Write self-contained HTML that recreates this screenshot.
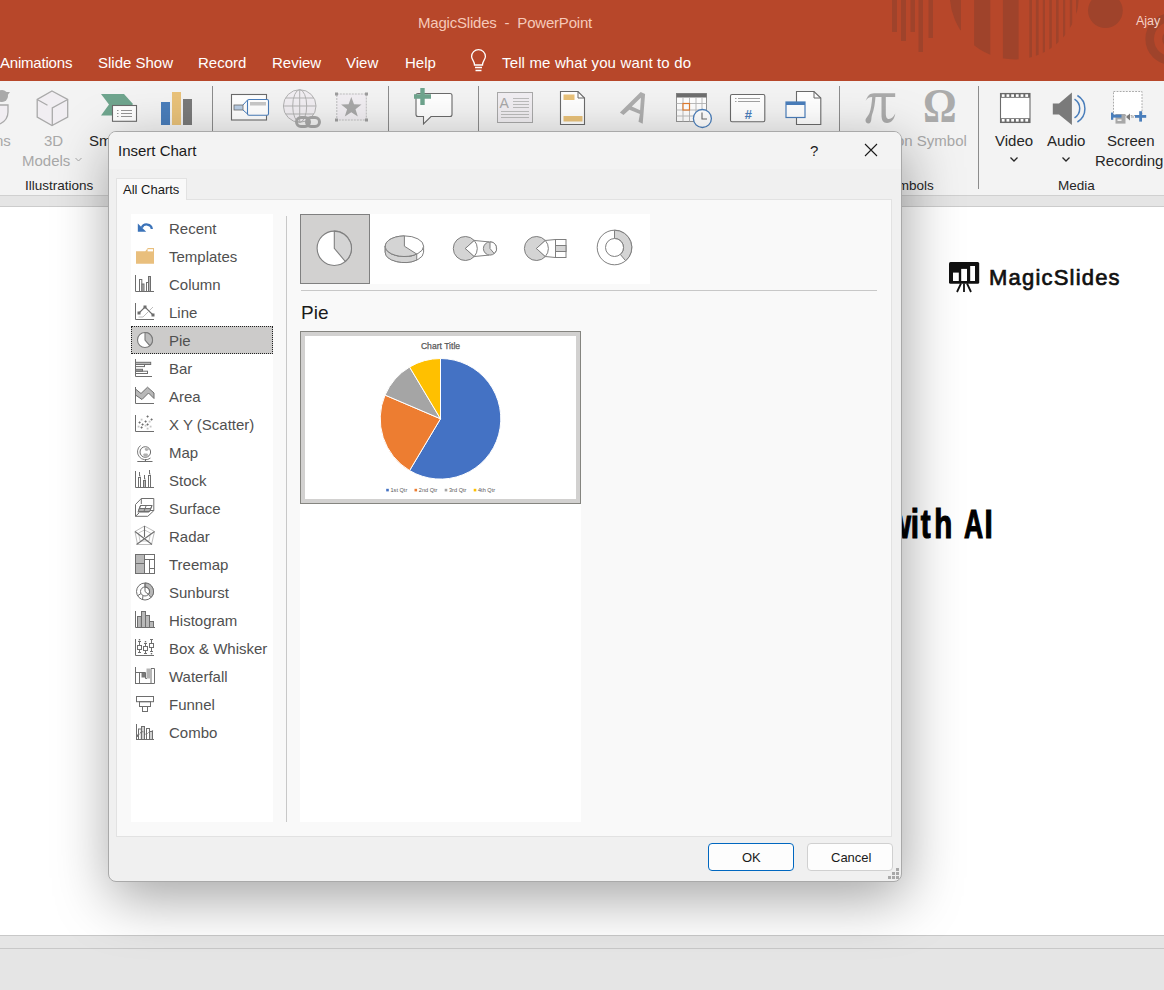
<!DOCTYPE html>
<html><head><meta charset="utf-8">
<style>
*{box-sizing:border-box}
html,body{margin:0;padding:0}
body{width:1164px;height:990px;overflow:hidden;position:relative;background:#fff;font-family:"Liberation Sans",sans-serif;color:#262626}
.a{position:absolute}
.t{position:absolute;white-space:nowrap;line-height:1}
#title{left:0;top:0;width:1164px;height:81px;background:#B7472A}
#ribbon{left:0;top:81px;width:1164px;height:114px;background:#F3F3F3}
.menu{color:#fff;font-size:15px;top:55px}
.rl{font-size:15px;color:#262626}
.rg{font-size:15px;color:#A8A8A8}
.sep{position:absolute;width:1px;background:#C8C8C8}
#dlg{left:108px;top:131px;width:794px;height:751px;background:#F0F0F0;border:1px solid #A9A9A9;border-radius:8px;box-shadow:3px 16px 56px rgba(0,0,0,0.36)}
.li{font-size:15px;color:#505050;left:169px}
</style></head><body>
<!-- title bar -->
<div id="title" class="a"></div>
<div class="t" style="left:418px;top:15px;font-size:15px;color:#F6C9B9;letter-spacing:-0.2px">MagicSlides&nbsp; -&nbsp; PowerPoint</div>
<div class="t" style="left:1136px;top:15px;font-size:12.5px;color:#F5D3C8;z-index:3">Ajay</div>
<div class="t menu" style="left:0px;letter-spacing:-0.2px">Animations</div>
<div class="t menu" style="left:98px">Slide Show</div>
<div class="t menu" style="left:198px">Record</div>
<div class="t menu" style="left:272px">Review</div>
<div class="t menu" style="left:346px">View</div>
<div class="t menu" style="left:405px">Help</div>
<div class="t menu" style="left:502px;letter-spacing:0.15px">Tell me what you want to do</div>

<!-- ribbon -->
<div id="ribbon" class="a"></div>
<div class="a" style="left:0;top:195px;width:1164px;height:1px;background:#D0D0D0"></div>
<div class="a" style="left:0;top:196px;width:1164px;height:10px;background:#E5E5E5"></div>
<div class="a" style="left:0;top:206px;width:1164px;height:1px;background:#CCCCCC"></div>
<div class="t rl" style="left:25px;top:179px;font-size:13.5px">Illustrations</div>
<div class="t rl" style="left:1058px;top:179px;font-size:13.5px">Media</div>


<!-- ribbon icons -->
<svg class="a" style="left:0;top:0" width="1164" height="200">
<!-- title decoration -->
<g fill="#9F432B">
<rect x="892" y="0" width="5" height="32"/>
<rect x="901" y="0" width="5" height="41"/>
<rect x="910.5" y="0" width="4.5" height="32"/>
<rect x="918.5" y="0" width="4.5" height="52"/>
<rect x="928.5" y="0" width="4.5" height="38"/>
<clipPath id="bigc"><circle cx="1014.5" cy="-5.2" r="64.7"/></clipPath>
<g clip-path="url(#bigc)">
<rect x="950" y="0" width="11" height="30.3"/>
<rect x="974.1" y="0" width="16.2" height="70"/>
<rect x="1002.9" y="0" width="15.7" height="70"/>
<rect x="1029.3" y="0" width="2.7" height="70"/>
<rect x="1035.9" y="0" width="2.7" height="70"/>
<rect x="1042.8" y="0" width="2.2" height="70"/>
<rect x="1049.3" y="0" width="2.5" height="70"/>
<rect x="1056" y="0" width="2.6" height="70"/>
<rect x="1063" y="0" width="2.2" height="70"/>
<rect x="1069.8" y="0" width="2.4" height="70"/>
<rect x="1076" y="0" width="2.6" height="70"/>
</g>
<circle cx="1105.4" cy="10.6" r="17.4"/>
</g>
<circle cx="1171.2" cy="39" r="21.5" fill="none" stroke="#9F432B" stroke-width="8.6"/><circle cx="1171.2" cy="39" r="9" fill="#9F432B"/>
<!-- lightbulb -->
<path d="M474.5 65 C474.5 61 471.6 59.5 471.6 56.5 A6.9 6.9 0 0 1 485.4 56.5 C485.4 59.5 482.5 61 482.5 65 Z" fill="none" stroke="#fff" stroke-width="1.3"/>
<path d="M475 67.5 H482 M475.5 70.5 H481.5" stroke="#fff" stroke-width="1.3"/>
<!-- icons person (partial) -->
<circle cx="2" cy="96" r="6" fill="#A9A9A9"/>
<path d="M-2 92 H10 L7 96 H-2 Z" fill="#A9A9A9"/>
<path d="M-2 105 H8 V112 C8 118 4 122 0 124" fill="#F1EEF2" stroke="#A9A9A9" stroke-width="1.3"/>
<!-- 3D cube -->
<path d="M52 91 L67.7 99.5 V117 L52 125.5 L37.2 117 V99.5 Z" fill="#F1EEF2" stroke="#A9A9A9" stroke-width="1.3"/>
<path d="M67.7 99.5 L52.3 108 V125.5 M37.2 99.5 L47.5 105.3" fill="none" stroke="#A9A9A9" stroke-width="1.3"/>
<!-- smartart -->
<path d="M101 94 H124 L133 104 L124 115.5 H101 L109 104.5 Z" fill="#6FA58E"/>
<rect x="112.5" y="105.5" width="24" height="15.8" fill="#fff" stroke="#6b6b6b" stroke-width="1.1"/>
<path d="M117 110.5 H118.5 M121 110.5 H132 M117 113.5 H118.5 M121 113.5 H132 M117 116.5 H118.5 M121 116.5 H132" stroke="#8a8a8a" stroke-width="0.9"/>
<!-- chart -->
<rect x="161" y="102" width="9" height="23" fill="#4A7EBB"/>
<rect x="172" y="92" width="9" height="33" fill="#E9C27A"/>
<rect x="183" y="99" width="9" height="26" fill="#7A7A7A"/>
<!-- separators -->
<g fill="#8C8C8C">
<rect x="212" y="86" width="1" height="46"/>
<rect x="388" y="86" width="1" height="46"/>
<rect x="478" y="86" width="1" height="46"/>
<rect x="839" y="86" width="1" height="46"/>
<rect x="978" y="86" width="1" height="103"/>
</g>
<!-- screenshot-ish -->
<rect x="231.5" y="94.5" width="35" height="25.5" fill="#fff" stroke="#6b6b6b" stroke-width="1.1"/>
<rect x="234" y="105" width="9" height="5" fill="#B9CDE5" stroke="#6b6b6b" stroke-width="0.8"/>
<path d="M243 105 L247.5 100 M243 110 L247.5 114" stroke="#4A7EBB" stroke-width="1"/>
<rect x="247.5" y="99.5" width="21" height="15.7" rx="1.5" fill="#fff" stroke="#4A7EBB" stroke-width="1.1"/>
<rect x="250" y="102" width="16" height="3.5" fill="#C8C8C8"/>
<!-- globe link -->
<circle cx="299.7" cy="106" r="16.3" fill="#F1EEF2" stroke="#B3B3B3" stroke-width="1"/>
<ellipse cx="299.7" cy="106" rx="7" ry="16.3" fill="none" stroke="#B3B3B3" stroke-width="1"/>
<path d="M299.7 89.7 V122.3 M283.4 106 H316 M285.5 98 H314 M285.5 114 H314" fill="none" stroke="#B3B3B3" stroke-width="1"/>
<path d="M300 124 h6 M309 120 h6" stroke="#A8A8A8" stroke-width="0"/>
<rect x="296.5" y="117.5" width="13" height="9" rx="4.5" fill="none" stroke="#A8A8A8" stroke-width="3"/>
<rect x="306.5" y="117.5" width="13" height="9" rx="4.5" fill="none" stroke="#A8A8A8" stroke-width="3"/>
<!-- star frame -->
<rect x="336.8" y="94" width="29.5" height="26" fill="#F1EEF2" stroke="#B8B8B8" stroke-width="0.9" stroke-dasharray="2 1"/>
<g fill="#9E9E9E"><rect x="335" y="92.5" width="3" height="3"/><rect x="365" y="92.5" width="3" height="3"/><rect x="335" y="118.5" width="3" height="3"/><rect x="365" y="118.5" width="3" height="3"/></g>
<path d="M351.3 97 L354 104.3 L361.5 104.5 L355.5 109.2 L357.8 116.5 L351.3 112.2 L344.8 116.5 L347.1 109.2 L341.1 104.5 L348.6 104.3 Z" fill="#A8A8A8"/>
<!-- comment -->
<path d="M418 93.5 H450 A2 2 0 0 1 452 95.5 V114.5 A2 2 0 0 1 450 116.5 H431 L423.5 124 V116.5 H418 A2 2 0 0 1 416 114.5 V95.5 A2 2 0 0 1 418 93.5 Z" fill="#fff" stroke="#6b6b6b" stroke-width="1.1"/>
<path d="M420.3 88 H424.7 V94.3 H431 V98.7 H424.7 V105 H420.3 V98.7 H414 V94.3 H420.3 Z" fill="#6FA58E"/>
<!-- text box -->
<rect x="497.5" y="92.5" width="35" height="30" fill="#F1EEF2" stroke="#A9A9A9" stroke-width="1"/>
<text x="499.5" y="107.5" font-family="Liberation Sans" font-size="14" fill="#A8A8A8">A</text>
<path d="M513 98.5 H529 M513 101.5 H529 M513 104.5 H529 M513 107.5 H529 M501 111.5 H529 M501 114.5 H529 M501 117.5 H529" stroke="#B5B5B5" stroke-width="0.9"/>
<!-- header footer -->
<path d="M560.5 91.5 H578 L584.5 98 V124.5 H560.5 Z" fill="#fff" stroke="#6b6b6b" stroke-width="1.1"/>
<path d="M578 91.5 V98 H584.5" fill="none" stroke="#6b6b6b" stroke-width="1"/>
<rect x="563.5" y="94.5" width="11" height="5.5" fill="#E9C27A"/>
<rect x="563.5" y="116" width="19" height="5.5" fill="#E9C27A"/>
<!-- wordart -->
<path fill-rule="evenodd" d="M619.9 112.6 L640.7 92 L645.1 94.1 L642.7 123.8 L638.5 121.7 L639.9 113.9 L629.4 109.8 L623.5 114.9 Z M631.8 106.6 L640.1 110.2 L640.9 97.7 Z" fill="#AEAEAE"/>
<!-- date time -->
<rect x="676.5" y="93.5" width="30" height="28" fill="#fff" stroke="#8a8a8a" stroke-width="0.9"/>
<rect x="676.5" y="93.5" width="30" height="4" fill="#6E6E6E"/>
<path d="M676.5 103.5 H706.5 M676.5 110 H706.5 M676.5 116 H706.5 M683 97.5 V121.5 M689.5 97.5 V121.5 M696 97.5 V121.5 M702 97.5 V121.5" stroke="#B5B5B5" stroke-width="0.9"/>
<rect x="683" y="103.5" width="6.5" height="6.5" fill="#fff" stroke="#E07B2D" stroke-width="1.2"/>
<circle cx="702.4" cy="118.5" r="9" fill="#fff" stroke="#4A7EBB" stroke-width="1.3"/>
<path d="M702 112.5 V119 H707" fill="none" stroke="#6b6b6b" stroke-width="1.1"/>
<!-- slide number -->
<rect x="730.5" y="94.5" width="34.3" height="27.2" rx="1.5" fill="#fff" stroke="#6b6b6b" stroke-width="1.1"/>
<path d="M735 98.5 H736.5 M738 98.5 H760 M735 101.5 H736.5 M738 101.5 H760" stroke="#8a8a8a" stroke-width="0.8"/>
<text x="748" y="118.5" font-family="Liberation Sans" font-weight="bold" font-style="italic" font-size="13" fill="#4A7EBB" text-anchor="middle">#</text>
<!-- object -->
<path d="M796.5 91.5 H814 L820.8 98 V124.5 H796.5 Z" fill="#fff" stroke="#6b6b6b" stroke-width="1.1"/>
<path d="M814 91.5 V98 H820.8" fill="none" stroke="#6b6b6b" stroke-width="1"/>
<rect x="786" y="102" width="19" height="15.5" fill="#fff" stroke="#4A7EBB" stroke-width="1.2"/>
<rect x="786" y="102" width="19" height="3" fill="#4A7EBB"/>
<!-- pi omega -->
<path d="M865.6 101 C867.5 96 869.5 93.3 874 93.3 H895.2 V97 H885.8 V113 C885.8 117.5 887 119 889 119 C891.5 119 893.5 116.5 895.3 113.5 C894.5 119 891.5 123 887 123 C883 123 881.5 120 881.5 115 V97 H875.5 C875 103 874 110 872 115 C871 118 872 123.5 868.5 123.5 C866.5 123.5 865.5 122 865.5 120.5 C865.5 118 868 116.5 869.5 113 C871 109 871.8 103 872.2 97 C869 97 867 98.5 865.6 101 Z" fill="#ABABAB"/>
<text x="923" y="121.7" font-family="Liberation Serif" font-weight="bold" font-size="42" fill="#ABABAB" transform="translate(0 121.7) scale(1 1.14) translate(0 -121.7)">Ω</text>
<!-- video -->
<rect x="1000.5" y="93.5" width="29.5" height="29" fill="#fff" stroke="#6b6b6b" stroke-width="1.1"/>
<rect x="1000.5" y="93.5" width="29.5" height="4.3" fill="#6b6b6b"/>
<rect x="1000.5" y="118.2" width="29.5" height="4.3" fill="#6b6b6b"/>
<g fill="#fff"><rect x="1001.8" y="94.3" width="2.8" height="2.6"/><rect x="1006.5" y="94.3" width="2.8" height="2.6"/><rect x="1011.2" y="94.3" width="2.8" height="2.6"/><rect x="1015.9" y="94.3" width="2.8" height="2.6"/><rect x="1020.6" y="94.3" width="2.8" height="2.6"/><rect x="1025.3" y="94.3" width="2.8" height="2.6"/><rect x="1001.8" y="119" width="2.8" height="2.6"/><rect x="1006.5" y="119" width="2.8" height="2.6"/><rect x="1011.2" y="119" width="2.8" height="2.6"/><rect x="1015.9" y="119" width="2.8" height="2.6"/><rect x="1020.6" y="119" width="2.8" height="2.6"/><rect x="1025.3" y="119" width="2.8" height="2.6"/></g>
<!-- audio -->
<path d="M1052.8 103.5 H1059 L1071.9 92.5 V125 L1059 114.5 H1052.8 Z" fill="#7A7A7A"/>
<path d="M1074.5 99.2 A11 11 0 0 1 1074.5 117.9 M1077.4 95.5 A15.46 15.46 0 0 1 1077.4 122" fill="none" stroke="#4A7EBB" stroke-width="1.5"/>
<!-- screen recording -->
<rect x="1113.5" y="91.5" width="28.5" height="24" fill="#fff" stroke="#A0A0A0" stroke-width="0.9" stroke-dasharray="1.8 1.3"/>
<rect x="1115.5" y="114" width="10" height="9.6" fill="#A8A8A8"/>
<rect x="1117.5" y="119.5" width="4" height="1.3" fill="#fff"/>
<rect x="1111" y="112.6" width="2.3" height="7.2" fill="#4A7EBB"/>
<rect x="1111" y="114.6" width="10.5" height="3" fill="#4A7EBB"/>
<path d="M1126 117 L1130 113.5 V120.5 Z" fill="#7A7A7A"/>
<rect x="1131" y="116.5" width="3" height="1" fill="#999"/>
<rect x="1135" y="115" width="11.2" height="2.8" fill="#4A7EBB"/>
<rect x="1139.2" y="111.2" width="2.8" height="10.4" fill="#4A7EBB"/>
<!-- chevrons -->
<path d="M75.5 158 L78.5 161 L81.5 158" fill="none" stroke="#A8A8A8" stroke-width="1"/>
<path d="M1010.5 157.5 L1014 161 L1017.5 157.5" fill="none" stroke="#262626" stroke-width="1.3"/>
<path d="M1062.5 157.5 L1066 161 L1069.5 157.5" fill="none" stroke="#262626" stroke-width="1.3"/>
</svg>
<div class="t rg" style="left:-5px;top:133px">ns</div>
<div class="t rg" style="left:44px;top:133px">3D</div>
<div class="t rg" style="left:22px;top:153px">Models</div>
<div class="t rl" style="left:89px;top:133px">Sm</div>
<div class="t rg" style="left:896px;top:133px">on Symbol</div>
<div class="t rl" style="left:995px;top:133px">Video</div>
<div class="t rl" style="left:1047px;top:133px">Audio</div>
<div class="t rl" style="left:1107px;top:133px">Screen</div>
<div class="t rl" style="left:1095px;top:153px">Recording</div>
<div class="t rl" style="left:882px;top:179px;font-size:13.5px">Symbols</div>

<!-- slide content -->
<svg class="a" style="left:940px;top:255px" width="190" height="45">
<rect x="9" y="7" width="30.2" height="21.7" rx="1.5" fill="#111"/>
<rect x="13" y="17.6" width="5.8" height="8.4" fill="#fff"/>
<rect x="21.2" y="13.9" width="5.8" height="12.1" fill="#fff"/>
<rect x="30.2" y="11" width="4.8" height="15" fill="#fff"/>
<path d="M21 28.5 L17 37 M24 28.5 V37 M27 28.5 L31 37" stroke="#111" stroke-width="1.8"/>
</svg>
<div class="t" style="left:989px;top:267px;font-size:22px;color:#111;-webkit-text-stroke:0.7px #111;letter-spacing:1.2px">MagicSlides</div>
<svg class="a" style="left:0;top:0" width="1164" height="990"><g transform="scale(0.72 1)" font-family="Liberation Sans" font-weight="bold" font-size="41" fill="#000" stroke="#000" stroke-width="1.2"><text x="1233.5" y="537.8">w</text><text x="1264.8" y="537.8">i</text><text x="1278.9" y="537.8">t</text><text x="1297.7" y="537.8">h</text><text x="1487.7" y="537.8" transform="scale(0.9 1)">A</text><text x="1367.2" y="537.8">I</text></g></svg>
<!-- bottom -->
<div class="a" style="left:0;top:935px;width:1164px;height:1px;background:#C8C8C8"></div>
<div class="a" style="left:0;top:936px;width:1164px;height:54px;background:#E5E5E5"></div>
<div class="a" style="left:0;top:948px;width:1164px;height:1px;background:#C8C8C8"></div>


<!-- dialog -->
<div id="dlg" class="a"></div>
<div class="a" style="left:109px;top:132px;width:792px;height:37px;background:#F3F3F3;border-radius:7px 7px 0 0"></div>
<div class="t" style="left:118px;top:143px;font-size:15px;color:#1a1a1a">Insert Chart</div>
<div class="t" style="left:810px;top:143px;font-size:15px;color:#1a1a1a">?</div>
<svg class="a" style="left:864px;top:143px" width="14" height="14" viewBox="0 0 14 14"><path d="M1 1L13 13M13 1L1 13" stroke="#1a1a1a" stroke-width="1.1" fill="none"/></svg>
<!-- tab + panel -->
<div class="a" style="left:116px;top:178px;width:71px;height:22px;background:#F9F9F9;border:1px solid #E2E2E2;border-bottom:none"></div>
<div class="a" style="left:116px;top:199px;width:776px;height:638px;background:#F9F9F9;border:1px solid #E2E2E2"></div>
<div class="a" style="left:117px;top:199px;width:69px;height:2px;background:#F9F9F9"></div>
<div class="t" style="left:123px;top:183px;font-size:13px;color:#1a1a1a">All Charts</div>
<!-- left list -->
<div class="a" style="left:131px;top:214px;width:142px;height:608px;background:#fff"></div>
<div class="a" style="left:131px;top:326px;width:142px;height:28px;background:#CCCBCA;border:1px dotted #222"></div>
<div class="a" style="left:286px;top:216px;width:1px;height:606px;background:#C8C8C8"></div>
<!-- right -->
<div class="a" style="left:300px;top:214px;width:350px;height:70px;background:#fff"></div>
<div class="a" style="left:300px;top:214px;width:70px;height:70px;background:#D2D1D0;border:1px solid #808080"></div>
<div class="a" style="left:301px;top:290px;width:576px;height:1px;background:#C8C8C8"></div>
<div class="t" style="left:301px;top:303px;font-size:19px;color:#1a1a1a">Pie</div>
<div class="a" style="left:300px;top:331px;width:281px;height:491px;background:#fff"></div>
<div class="a" style="left:300px;top:331px;width:281px;height:173px;background:#fff;border:1px solid #858580;box-shadow:inset 0 0 0 4px #D2D1D0"></div>
<!-- list -->
<div class="t li" style="top:221px">Recent</div>
<div class="t li" style="top:249px">Templates</div>
<div class="t li" style="top:277px">Column</div>
<div class="t li" style="top:305px">Line</div>
<div class="t li" style="top:333px">Pie</div>
<div class="t li" style="top:361px">Bar</div>
<div class="t li" style="top:389px">Area</div>
<div class="t li" style="top:417px">X Y (Scatter)</div>
<div class="t li" style="top:445px">Map</div>
<div class="t li" style="top:473px">Stock</div>
<div class="t li" style="top:501px">Surface</div>
<div class="t li" style="top:529px">Radar</div>
<div class="t li" style="top:557px">Treemap</div>
<div class="t li" style="top:585px">Sunburst</div>
<div class="t li" style="top:613px">Histogram</div>
<div class="t li" style="top:641px">Box &amp; Whisker</div>
<div class="t li" style="top:669px">Waterfall</div>
<div class="t li" style="top:697px">Funnel</div>
<div class="t li" style="top:725px">Combo</div>
<svg class="a" style="left:0;top:0" width="1164" height="990">
<g fill="none" stroke="#6E6E6E" stroke-width="1">
<!-- recent -->
<path d="M151.8 229 A5.2 5 0 0 0 141.8 227.6" stroke="#3B73B9" stroke-width="2.3"/>
<path d="M137.8 223.5 L137.8 231.8 L146.2 231.8 Z" fill="#3B73B9" stroke="none"/>
<!-- folder -->
<path d="M136 251.3 H145.3 L147.8 248 H154 V263.8 H136 Z" fill="#E9BF7D" stroke="none"/>
<rect x="147.6" y="249.2" width="5.4" height="2.2" fill="#fff" stroke="none"/>
<!-- column -->
<path d="M135.5 275 V291.5 H154"/>
<rect x="139.5" y="279.5" width="2.3" height="12"/>
<rect x="142" y="284" width="2" height="7.5" fill="#B8B8B8"/>
<rect x="146.5" y="282.5" width="2" height="9"/>
<rect x="148.5" y="276.5" width="2" height="15" fill="#B8B8B8"/>
<!-- line -->
<path d="M135.5 303 V319.5 H154"/>
<path d="M139 313 L145 307 L153 315" stroke-width="1.1"/>
<path d="M138.5 317 L143 317 L153 307" stroke="#BDBDBD"/>
<rect x="138" y="312" width="2" height="2" fill="#6E6E6E"/><rect x="144" y="306" width="2" height="2" fill="#6E6E6E"/><rect x="152" y="314" width="2" height="2" fill="#6E6E6E"/>
<!-- pie -->
<circle cx="145" cy="340" r="7.5" fill="#fff" stroke="#7a7a7a" stroke-width="1.1"/>
<path d="M145 340 V332.5 A7.5 7.5 0 0 1 149.8 345.7 Z" fill="#BDBDBD" stroke="#7a7a7a" stroke-width="1.1"/>
<!-- bar -->
<path d="M135.5 359 V376.5 H152"/>
<rect x="135.5" y="362.3" width="15.2" height="2.2" fill="#B8B8B8"/>
<rect x="135.5" y="364.5" width="9" height="2.1"/>
<rect x="135.5" y="369.3" width="7" height="1.9" fill="#B8B8B8"/>
<rect x="135.5" y="371.2" width="12" height="2.3"/>
<!-- area -->
<path d="M135.5 389 L141 393.5 L147.5 387.2 L154 393 V398.5 L148.5 393 L142 399.5 L135.5 395 Z" fill="#B8B8B8"/>
<path d="M135.5 387 V403.5 H154"/>
<!-- scatter -->
<path d="M135.5 415 V431.5 H154"/>
<g fill="#6E6E6E" stroke="none">
<rect x="146.7" y="415.7" width="1.8" height="1.8" transform="rotate(45 147.6 416.6)"/>
<rect x="150.7" y="418.7" width="1.8" height="1.8" transform="rotate(45 151.6 419.6)"/>
<rect x="138.7" y="421.7" width="1.8" height="1.8" transform="rotate(45 139.6 422.6)"/>
<rect x="144.7" y="420.7" width="1.8" height="1.8" transform="rotate(45 145.6 421.6)"/>
<rect x="141.7" y="423.7" width="1.8" height="1.8" transform="rotate(45 142.6 424.6)"/>
<rect x="146.7" y="423.7" width="1.8" height="1.8" transform="rotate(45 147.6 424.6)"/>
<rect x="140.7" y="426.7" width="1.8" height="1.8" transform="rotate(45 141.6 427.6)"/>
</g>
<g fill="#C4C4C4" stroke="none">
<rect x="140.7" y="418.7" width="1.8" height="1.8"/><rect x="148.7" y="420.7" width="1.8" height="1.8"/>
<rect x="137.7" y="425.7" width="1.8" height="1.8"/><rect x="144.7" y="424.7" width="1.8" height="1.8"/>
<rect x="149.7" y="425.7" width="1.8" height="1.8"/><rect x="146.7" y="427.7" width="1.8" height="1.8"/>
</g>
<!-- map -->
<circle cx="145.3" cy="452" r="5.3"/>
<path d="M140.5 445.5 A7 7 0 0 0 150.5 458" stroke-width="0.9"/>
<path d="M137.3 461.5 H152.5 M145.5 459 V461.5"/>
<path d="M145.5 448 a2 1.6 0 1 0 3 0.5 z M144 453.5 a2.4 1.8 0 1 0 3.2 0 z" fill="#AFAFAF" stroke="none"/>
<!-- stock -->
<path d="M135.5 471 V487.5 H154"/>
<rect x="138.5" y="477.5" width="2" height="10"/>
<rect x="143.5" y="480.5" width="2" height="7" fill="#B8B8B8"/>
<rect x="148.5" y="475.5" width="2" height="12"/>
<path d="M139.5 472 V476 H140.5 M144.5 475 V479 H145.5 M149.5 470 V474 H150.5"/>
<!-- surface -->
<path d="M135.5 504.5 L141.3 498.5 H153.8 V510.7 L147.8 516.3 H135.5 Z M141.3 498.5 V504 M135.5 516.3 L139 513"/>
<path d="M147.5 510.5 H153.8"/>
<path d="M138.2 511.5 L140.5 505.5 H152 L149.6 511.5 Z" fill="#fff"/>
<path d="M137.5 513 L139.2 509 H150.7 L148.8 513 Z" fill="#B0B0B0" stroke="none"/>
<path d="M138.2 511.5 L140.5 505.5 H152 L149.6 511.5 Z M139.3 508.5 H150.8 M146.2 505.5 L143.9 511.5"/>
<!-- radar -->
<path d="M144.5 526 L154.5 531.5 L151.5 544.5 H137.5 L135 531.5 Z" stroke="#BDBDBD"/>
<path d="M144.5 530 L150.5 533 L149 541 H140 L138.5 533 Z" stroke="#C8C8C8"/>
<path d="M144.5 526 V537 M135 531.5 L152 544.5 M154.5 531.5 L136.5 544.5" stroke-width="1.1"/>
<!-- treemap -->
<rect x="135.5" y="554.5" width="19" height="19"/>
<rect x="135.5" y="554.5" width="9" height="19" fill="#B8B8B8"/>
<path d="M135.5 563.5 H144.5 M144.5 559.5 H154.5 M149.5 559.5 V573.5 M149.5 568.5 H154.5"/>
<!-- sunburst -->
<circle cx="145" cy="591.5" r="8.5"/>
<path d="M145 583 A8.5 8.5 0 0 1 151 597.5 L148.5 594.5 A4.5 4.5 0 0 0 145 587 Z" fill="#B8B8B8"/>
<circle cx="145" cy="591.5" r="4.5"/>
<path d="M145 583 V591.5 L148.5 594.5 M138 595.5 L141 593.5 M143 595.5 L142.5 599.5"/>
<!-- histogram -->
<path d="M135.5 611 V627.5 H155"/>
<rect x="137.5" y="616.5" width="3.8" height="11" fill="#B8B8B8"/>
<rect x="141.5" y="611.5" width="4" height="16" fill="#B8B8B8"/>
<rect x="145.5" y="615.5" width="4" height="12" fill="#B8B8B8"/>
<rect x="149.5" y="621.5" width="4" height="6" fill="#B8B8B8"/>
<!-- box whisker -->
<path d="M135.5 639 V655.5 H154"/>
<rect x="137.5" y="645.5" width="4" height="4"/><rect x="143.5" y="646.5" width="4" height="4"/><rect x="149.5" y="643.5" width="4" height="4"/>
<path d="M139.5 641 V645.5 M139.5 649.5 V652.5 M138 641.5 H141 M138 652.5 H141 M145.5 643 V646.5 M145.5 650.5 V653.5 M144 643.5 H147 M144 653.5 H147 M151.5 639.5 V643.5 M151.5 647.5 V651.5 M150 639.5 H153 M150 651.5 H153"/>
<rect x="138.8" y="639" width="1.4" height="1.4" fill="#6E6E6E" stroke="none"/><rect x="144.8" y="641" width="1.4" height="1.4" fill="#6E6E6E" stroke="none"/><rect x="150.8" y="653" width="1.4" height="1.4" fill="#6E6E6E" stroke="none"/>
<!-- waterfall -->
<path d="M135.5 667 V683.5 H154.5 V668.5 H151 V683.5"/>
<rect x="135.5" y="672.5" width="4" height="11"/>
<rect x="141.5" y="672.5" width="3.5" height="5" fill="#7A7A7A" stroke="none"/>
<path d="M139.5 672.5 H145.5 V678.5 H147"/>
<rect x="146.5" y="668.5" width="3.5" height="10" fill="#B4B4B4" stroke="none"/>
<!-- funnel -->
<rect x="136.5" y="696.5" width="17" height="5.2"/>
<rect x="139.5" y="701.7" width="11" height="4.8"/>
<rect x="142.5" y="706.5" width="5" height="5"/>
<!-- combo -->
<path d="M136.5 724 V739.5 H154"/>
<rect x="136.5" y="735" width="2" height="4.5"/>
<rect x="138.5" y="729" width="2.8" height="10.5"/>
<rect x="141.5" y="726.5" width="3" height="13" fill="#D0D0D0"/>
<rect x="146.5" y="728.5" width="3" height="11"/>
<rect x="149.5" y="731.5" width="3" height="8" fill="#D0D0D0"/>
<path d="M137 737 L140 733 L143 731.5 L146 735 L149 732 L153.5 730.5" stroke-dasharray="1.5 1"/>
</g>
</svg>
<!-- charts -->
<svg class="a" style="left:0;top:0" width="1164" height="990">
<circle cx="334.3" cy="248.3" r="17.2" fill="#fff" stroke="#7F7F7F" stroke-width="1.1"/><path d="M334.3 248.3 V231.10000000000002 A17.2 17.2 0 0 1 345.36 261.48 Z" fill="#D4D4D4" stroke="#7F7F7F" stroke-width="1.1"/><path d="M385.2 246.2 V252.2 A19.2 10.3 0 0 0 423.59999999999997 252.2 V246.2 Z" fill="#fff" stroke="#7F7F7F" stroke-width="1"/><path d="M385.2 246.2 V252.2 A19.2 10.3 0 0 0 416.74 260.09 V254.09 A19.2 10.3 0 0 1 385.2 246.2 Z" fill="#D4D4D4" stroke="#7F7F7F" stroke-width="1"/><ellipse cx="404.4" cy="246.2" rx="19.2" ry="10.3" fill="#fff" stroke="#7F7F7F" stroke-width="1"/><path d="M404.4 246.2 V235.89999999999998 A19.2 10.3 0 1 0 416.74 254.09 Z" fill="#D4D4D4" stroke="#7F7F7F" stroke-width="1"/><path d="M465.3 248.5 L474.22 240.47 A12 12 0 1 0 474.22 256.53 Z" fill="#D4D4D4" stroke="#7F7F7F" stroke-width="1"/><path d="M465.3 248.5 L474.22 240.47 A12 12 0 0 1 474.22 256.53 Z" fill="#fff" stroke="#7F7F7F" stroke-width="1"/><path d="M474.22 240.47 L489 241.9 M474.22 256.53 L489 255.1" stroke="#7F7F7F" stroke-width="1"/><circle cx="490" cy="248.5" r="6.6" fill="#D4D4D4" stroke="#7F7F7F" stroke-width="1"/><path d="M490 248.5 V241.9 A6.6 6.6 0 0 1 494.24 253.56 Z" fill="#fff" stroke="#7F7F7F" stroke-width="1"/><path d="M536.4 248.5 L545.32 240.47 A12 12 0 1 0 545.32 256.53 Z" fill="#D4D4D4" stroke="#7F7F7F" stroke-width="1"/><path d="M536.4 248.5 L545.32 240.47 A12 12 0 0 1 545.32 256.53 Z" fill="#fff" stroke="#7F7F7F" stroke-width="1"/><path d="M545.32 240.47 L555.5 239.5 M545.32 256.53 L555.5 257.5" stroke="#7F7F7F" stroke-width="1"/><rect x="555.5" y="239.5" width="10.5" height="18" fill="#fff" stroke="#7F7F7F" stroke-width="1"/><rect x="555.5" y="245.5" width="10.5" height="6" fill="#D4D4D4" stroke="#7F7F7F" stroke-width="1"/><circle cx="614.5" cy="247.5" r="17.3" fill="#fff" stroke="#7F7F7F" stroke-width="1"/><path d="M614.5 230.2 A17.3 17.3 0 0 1 625.62 260.75 L620.29 254.39 A9 9 0 0 0 614.5 238.5 Z" fill="#D4D4D4" stroke="#7F7F7F" stroke-width="1"/><circle cx="614.5" cy="247.5" r="9" fill="#fff" stroke="#7F7F7F" stroke-width="1"/>
<text x="440.5" y="349.3" font-size="8.6" fill="#595959" stroke="#595959" stroke-width="0.25" text-anchor="middle" font-family="Liberation Sans">Chart Title</text>
<path d="M440.5 418.8 L440.50 358.50 A60.3 60.3 0 1 1 409.57 470.56 Z" fill="#4472C4" stroke="#fff" stroke-width="1"/><path d="M440.5 418.8 L409.57 470.56 A60.3 60.3 0 0 1 385.05 395.10 Z" fill="#ED7D31" stroke="#fff" stroke-width="1"/><path d="M440.5 418.8 L385.05 395.10 A60.3 60.3 0 0 1 409.57 367.04 Z" fill="#A5A5A5" stroke="#fff" stroke-width="1"/><path d="M440.5 418.8 L409.57 367.04 A60.3 60.3 0 0 1 440.50 358.50 Z" fill="#FFC000" stroke="#fff" stroke-width="1"/>
<rect x="386.2" y="488.8" width="2.6" height="2.6" fill="#4472C4"/><text x="390.5" y="492" font-size="5.6" fill="#595959" font-family="Liberation Sans">1st Qtr</text><rect x="414.5" y="488.8" width="2.6" height="2.6" fill="#ED7D31"/><text x="418.8" y="492" font-size="5.6" fill="#595959" font-family="Liberation Sans">2nd Qtr</text><rect x="444.7" y="488.8" width="2.6" height="2.6" fill="#A5A5A5"/><text x="449" y="492" font-size="5.6" fill="#595959" font-family="Liberation Sans">3rd Qtr</text><rect x="473.7" y="488.8" width="2.6" height="2.6" fill="#FFC000"/><text x="478" y="492" font-size="5.6" fill="#595959" font-family="Liberation Sans">4th Qtr</text>
</svg>
<!-- buttons -->
<div class="a" style="left:708px;top:843px;width:86px;height:28px;background:#FDFDFD;border:1px solid #0067C0;border-radius:4px"></div>
<div class="t" style="left:742px;top:851px;font-size:13px;color:#1a1a1a">OK</div>
<div class="a" style="left:807px;top:843px;width:86px;height:28px;background:#FDFDFD;border:1px solid #D0D0D0;border-radius:4px"></div>
<div class="t" style="left:831px;top:851px;font-size:13px;color:#1a1a1a">Cancel</div>
<svg class="a" style="left:886px;top:866px" width="16" height="16"><g fill="#A9A9A9">
<rect x="10" y="2" width="3" height="3"/><rect x="6" y="6" width="3" height="3"/><rect x="10" y="6" width="3" height="3"/>
<rect x="2" y="10" width="3" height="3"/><rect x="6" y="10" width="3" height="3"/><rect x="10" y="10" width="3" height="3"/></g></svg>
</body></html>
